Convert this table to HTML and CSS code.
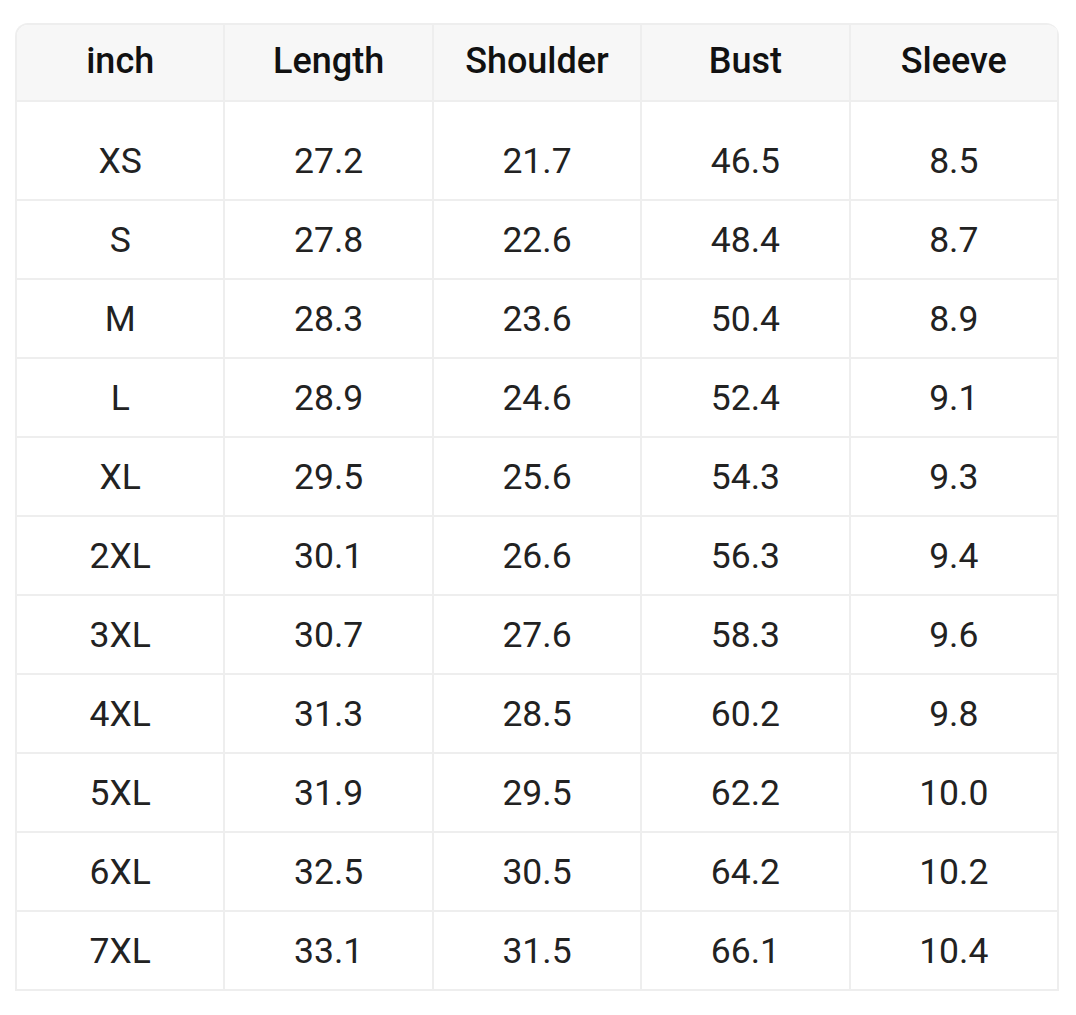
FILE: index.html
```html
<!DOCTYPE html>
<html>
<head>
<meta charset="utf-8">
<link rel="stylesheet" href="styles.css">
</head>
<body>
<div class="table">
  <div class="row head">
    <div class="cell">inch</div><div class="cell">Length</div><div class="cell">Shoulder</div><div class="cell">Bust</div><div class="cell">Sleeve</div>
  </div>
  <div class="row first">
    <div class="cell">XS</div><div class="cell">27.2</div><div class="cell">21.7</div><div class="cell">46.5</div><div class="cell">8.5</div>
  </div>
  <div class="row">
    <div class="cell">S</div><div class="cell">27.8</div><div class="cell">22.6</div><div class="cell">48.4</div><div class="cell">8.7</div>
  </div>
  <div class="row">
    <div class="cell">M</div><div class="cell">28.3</div><div class="cell">23.6</div><div class="cell">50.4</div><div class="cell">8.9</div>
  </div>
  <div class="row">
    <div class="cell">L</div><div class="cell">28.9</div><div class="cell">24.6</div><div class="cell">52.4</div><div class="cell">9.1</div>
  </div>
  <div class="row">
    <div class="cell">XL</div><div class="cell">29.5</div><div class="cell">25.6</div><div class="cell">54.3</div><div class="cell">9.3</div>
  </div>
  <div class="row">
    <div class="cell">2XL</div><div class="cell">30.1</div><div class="cell">26.6</div><div class="cell">56.3</div><div class="cell">9.4</div>
  </div>
  <div class="row">
    <div class="cell">3XL</div><div class="cell">30.7</div><div class="cell">27.6</div><div class="cell">58.3</div><div class="cell">9.6</div>
  </div>
  <div class="row">
    <div class="cell">4XL</div><div class="cell">31.3</div><div class="cell">28.5</div><div class="cell">60.2</div><div class="cell">9.8</div>
  </div>
  <div class="row">
    <div class="cell">5XL</div><div class="cell">31.9</div><div class="cell">29.5</div><div class="cell">62.2</div><div class="cell">10.0</div>
  </div>
  <div class="row">
    <div class="cell">6XL</div><div class="cell">32.5</div><div class="cell">30.5</div><div class="cell">64.2</div><div class="cell">10.2</div>
  </div>
  <div class="row">
    <div class="cell">7XL</div><div class="cell">33.1</div><div class="cell">31.5</div><div class="cell">66.1</div><div class="cell">10.4</div>
  </div>
</div>
</body>
</html>
```
FILE: styles.css
```css
html, body {
  margin: 0;
  padding: 0;
  background: #ffffff;
}
body {
  padding: 23px 17px 0 15px;
  font-family: Roboto, "Liberation Sans", sans-serif;
}
.table {
  width: 1044px;
  border-top: 2px solid #eeeeee;
  border-left: 2px solid #eeeeee;
  border-radius: 13px 13px 0 0;
  overflow: hidden;
  box-sizing: border-box;
}
.row {
  display: grid;
  grid-template-columns: repeat(5, 1fr);
  height: 79px;
}
.cell {
  display: flex;
  align-items: center;
  justify-content: center;
  border-right: 2px solid #eeeeee;
  border-bottom: 2px solid #eeeeee;
  font-size: 35.5px;
  color: #222222;
}
.head {
  height: 77px;
  background: #f7f7f7;
}
.head .cell {
  font-weight: 500;
  color: #111111;
  font-size: 36px;
  padding-bottom: 4px;
}
.first {
  height: 99px;
}
.first .cell {
  padding-top: 20px;
}
```
